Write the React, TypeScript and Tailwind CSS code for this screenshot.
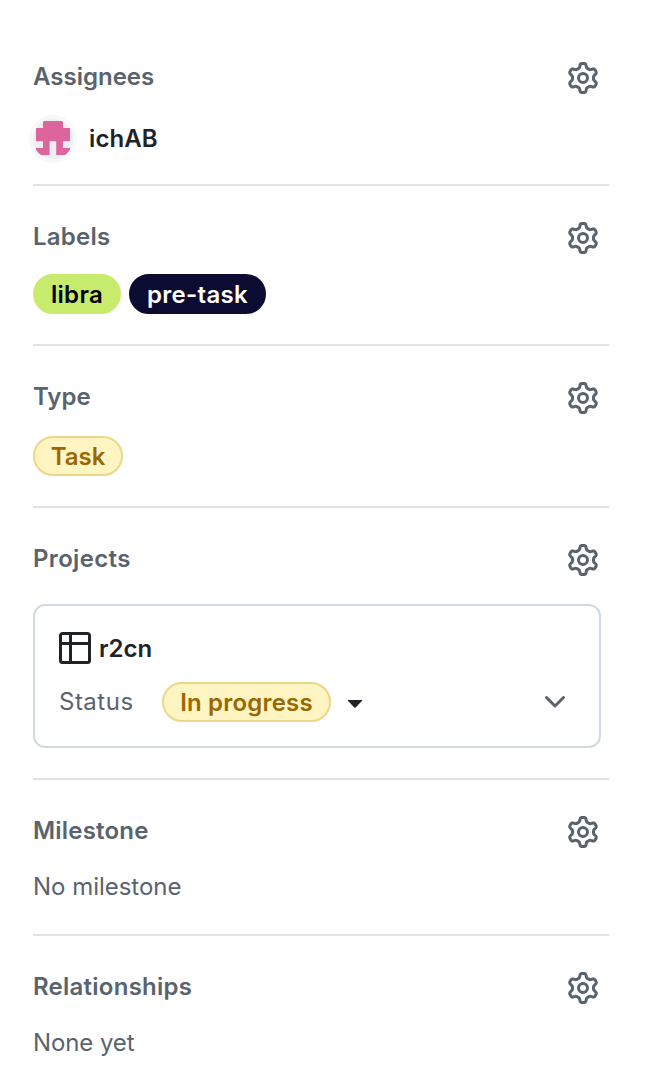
import type { ReactNode } from 'react';

const GEAR =
  'M8 0a8.2 8.2 0 0 1 .701.031C9.444.095 9.99.645 10.16 1.29l.288 1.107c.018.066.079.158.212.224.231.114.454.243.668.386.123.082.233.09.299.071l1.103-.303c.644-.176 1.392.021 1.82.63.27.385.506.792.704 1.218.315.675.111 1.422-.364 1.891l-.814.806c-.049.048-.098.147-.088.294.016.257.016.515 0 .772-.01.147.038.246.088.294l.814.806c.475.469.679 1.216.364 1.891a7.977 7.977 0 0 1-.704 1.217c-.428.61-1.176.807-1.82.63l-1.102-.302c-.067-.019-.177-.011-.3.071a5.909 5.909 0 0 1-.668.386c-.133.066-.194.158-.211.224l-.29 1.106c-.168.646-.715 1.196-1.458 1.26a8.006 8.006 0 0 1-1.402 0c-.743-.064-1.289-.614-1.458-1.26l-.289-1.106c-.018-.066-.079-.158-.212-.224a5.738 5.738 0 0 1-.668-.386c-.123-.082-.233-.09-.299-.071l-1.103.303c-.644.176-1.392-.021-1.82-.63a8.12 8.12 0 0 1-.704-1.218c-.315-.675-.111-1.422.363-1.891l.815-.806c.05-.048.098-.147.088-.294a6.214 6.214 0 0 1 0-.772c.01-.147-.038-.246-.088-.294l-.815-.806C.635 6.045.431 5.298.746 4.623a7.92 7.92 0 0 1 .704-1.217c.428-.61 1.176-.807 1.82-.63l1.102.302c.067.019.177.011.3-.071.214-.143.437-.272.668-.386.133-.066.194-.158.211-.224l.29-1.106C6.009.645 6.556.095 7.299.03 7.53.01 7.764 0 8 0Zm-.571 1.525c-.036.003-.108.036-.137.146l-.289 1.105c-.147.561-.549.967-.998 1.189-.173.086-.34.183-.5.29-.417.278-.97.423-1.529.27l-1.103-.303c-.109-.03-.175.016-.195.045-.22.312-.412.644-.573.99-.014.031-.021.11.059.19l.815.806c.411.406.562.957.53 1.456a4.709 4.709 0 0 0 0 .582c.032.499-.119 1.05-.53 1.456l-.815.806c-.081.08-.073.159-.059.19.162.346.353.677.573.989.02.03.085.076.195.046l1.102-.303c.56-.153 1.113-.008 1.53.27.161.107.328.204.501.29.447.222.85.629.997 1.189l.289 1.105c.029.109.101.143.137.146a6.6 6.6 0 0 0 1.142 0c.036-.003.108-.036.137-.146l.289-1.105c.147-.561.549-.967.998-1.189.173-.086.34-.183.5-.29.417-.278.97-.423 1.529-.27l1.103.303c.109.029.175-.016.195-.045.22-.313.411-.644.573-.99.014-.031.021-.11-.059-.19l-.815-.806c-.411-.406-.562-.957-.53-1.456a4.709 4.709 0 0 0 0-.582c-.032-.499.119-1.05.53-1.456l.815-.806c.081-.08.073-.159.059-.19a6.464 6.464 0 0 0-.573-.989c-.02-.03-.085-.076-.195-.046l-1.102.303c-.56.153-1.113.008-1.53-.27a4.44 4.44 0 0 0-.501-.29c-.447-.222-.85-.629-.997-1.189l-.289-1.105c-.029-.11-.101-.143-.137-.146a6.6 6.6 0 0 0-1.142 0ZM11 8a3 3 0 1 1-6 0 3 3 0 0 1 6 0ZM9.5 8a1.5 1.5 0 1 0-3.001.001A1.5 1.5 0 0 0 9.5 8Z';
const TABLE =
  'M0 1.75C0 .784.784 0 1.75 0h12.5C15.216 0 16 .784 16 1.75v12.5A1.75 1.75 0 0 1 14.25 16H1.75A1.75 1.75 0 0 1 0 14.25ZM6.5 6.5v8h7.75a.25.25 0 0 0 .25-.25V6.5Zm8-1.5V1.75a.25.25 0 0 0-.25-.25H6.5V5Zm-13 1.5v7.75c0 .138.112.25.25.25H5v-8ZM5 5V1.5H1.75a.25.25 0 0 0-.25.25V5Z';
const CHEVRON =
  'M12.78 5.22a.749.749 0 0 1 0 1.06l-4.25 4.25a.749.749 0 0 1-1.06 0L3.22 6.28a.749.749 0 1 1 1.06-1.06L8 8.939l3.72-3.719a.749.749 0 0 1 1.06 0Z';
const TRIANGLE =
  'm4.427 7.427 3.396 3.396a.25.25 0 0 0 .354 0l3.396-3.396A.25.25 0 0 0 11.396 7H4.604a.25.25 0 0 0-.177.427Z';

function Icon({ d, className = '' }: { d: string; className?: string }) {
  return (
    <svg viewBox="0 0 16 16" fill="currentColor" className={`size-8 shrink-0 ${className}`} aria-hidden="true">
      <path d={d} />
    </svg>
  );
}

function Section({ title, titleClass = '', className = '', children }: { title: string; titleClass?: string; className?: string; children: ReactNode }) {
  return (
    <section className={`border-b-2 border-[#dfe3e8] pt-8 last:border-b-0 ${className}`}>
      <header className="flex h-10 items-center justify-between pr-2.5 text-[#59636e]">
        <h3 className={`pb-0.5 font-semibold ${titleClass}`}>{title}</h3>
        <Icon d={GEAR} />
      </header>
      {children}
    </section>
  );
}

function Pill({ className, children }: { className: string; children: ReactNode }) {
  return (
    <span className={`flex h-10 shrink-0 items-center justify-center rounded-full border-2 pt-0.5 font-semibold ${className}`}>
      {children}
    </span>
  );
}

function Avatar() {
  return (
    <svg viewBox="0 0 48 48" className="-my-1 -ml-1 size-12 shrink-0" aria-hidden="true">
      <defs>
        <clipPath id="avatar-clip">
          <circle cx="24" cy="24" r="20" />
        </clipPath>
      </defs>
      <circle cx="24" cy="24" r="24" fill="#f6f8fa" />
      <circle cx="24" cy="24" r="20" fill="#efeff1" />
      <g fill="#dd659e" clipPath="url(#avatar-clip)">
        <path d="M14 6h20v7h7v13.3h-7v6.7h7v7H27.2V26.3h-6.6V40H7v-7h7v-6.7H7V13h7z" />
      </g>
    </svg>
  );
}

export default function App() {
  return (
    <main className="h-[1090px] w-[650px] overflow-hidden bg-white pt-[26px] pr-[41px] pl-[33px] font-[Inter,'Liberation_Sans',sans-serif] text-2xl leading-9 text-[#1f2328]">
      <Section title="Assignees" className="h-40">
        <div className="mt-[21px] flex h-10 items-center gap-3">
          <Avatar />
          <span className="font-semibold tracking-[0.1px]">ichAB</span>
        </div>
      </Section>
      <Section title="Labels" titleClass="tracking-[0.25px]" className="h-40">
        <div className="mt-4 flex gap-2">
          <Pill className="w-[88px] border-[#c7eb6c] bg-[#c7eb6c] tracking-[0.3px] text-black">libra</Pill>
          <Pill className="w-[137px] border-[#0c0c32] bg-[#0c0c32] tracking-[0.3px] text-white">pre-task</Pill>
        </div>
      </Section>
      <Section title="Type" className="h-[162px]">
        <div className="mt-[18px] flex">
          <Pill className="w-[90px] border-[#ecd787] bg-[#fff5c2] text-[#9a6700]">Task</Pill>
        </div>
      </Section>
      <Section title="Projects" titleClass="tracking-[0.33px]" className="h-[272px]">
        <div className="mt-6 mr-2 flex h-36 flex-col gap-[18px] rounded-xl border-2 border-[#d1d9e0] px-6 pt-[26px]">
          <div className="flex h-8 items-center gap-2">
            <Icon d={TABLE} />
            <span className="pt-0.5 font-semibold">r2cn</span>
          </div>
          <div className="flex h-10 items-center">
            <span className="w-[103px] tracking-[0.5px] text-[#59636e]">Status</span>
            <Pill className="w-[169px] border-[#ecd787] bg-[#fff5c2] tracking-[0.2px] text-[#9a6700]">In progress</Pill>
            <Icon d={TRIANGLE} className="ml-2" />
            <Icon d={CHEVRON} className="mr-1 ml-auto text-[#59636e]" />
          </div>
        </div>
      </Section>
      <Section title="Milestone" titleClass="tracking-[0.2px]" className="h-[156px]">
        <p className="mt-[17px] tracking-[-0.03px] text-[#59636e]">No milestone</p>
      </Section>
      <Section title="Relationships" titleClass="tracking-[0.25px]">
        <p className="mt-[17px] tracking-[-0.1px] text-[#59636e]">None yet</p>
      </Section>
    </main>
  );
}
